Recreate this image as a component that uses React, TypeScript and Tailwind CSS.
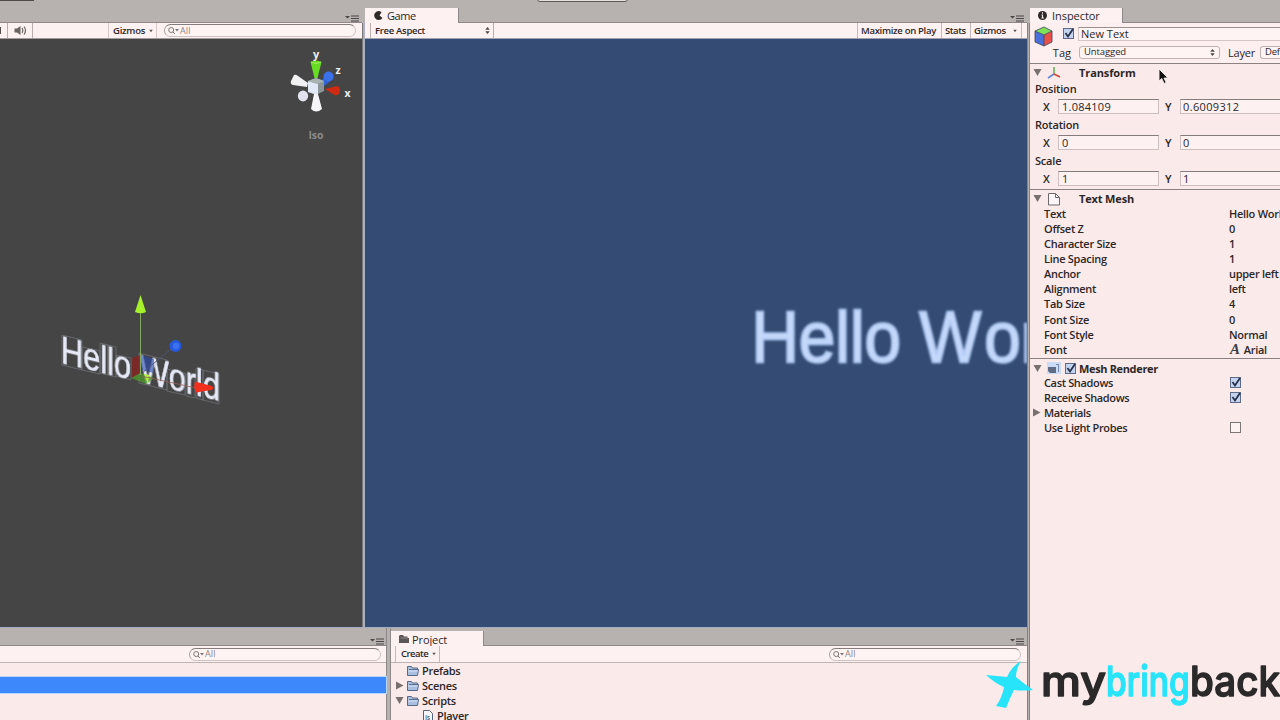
import React from 'react';
import clsx from 'clsx';

interface PanelMenuProps {
    className?: string;
}

function PanelMenu({ className }: PanelMenuProps) {
    return (
        <svg className={clsx('w-[14px] h-[7px] shrink-0', className)} viewBox="0 0 14 7">
            <path d="M0 1h5L2.5 3.6z" fill="#4b4646" />
            <path d="M6 1h8M6 3.5h8M6 6h8" stroke="#4b4646" strokeWidth="1.2" />
        </svg>
    );
}

function SearchField({ className }: { className?: string }) {
    return (
        <div
            className={clsx(
                'h-[13px] flex items-center rounded-full border border-[#cfc2c2] border-t-[#857d7d] border-l-[#a89f9f] bg-[#fff4f4] pl-[3px]',
                className
            )}
        >
            <svg className="w-[11px] h-[9px]" viewBox="0 0 11 9" fill="none" stroke="#7c7474">
                <circle cx="3.2" cy="4" r="2.5" />
                <path d="M5 6l1.8 2" />
                <path d="M7 3h4L9 5.4z" fill="#7c7474" stroke="none" />
            </svg>
            <span className="text-[9px] leading-[9px] font-normal tracking-[0.1px] text-[#8d8585] pl-px pb-px">All</span>
        </div>
    );
}

function Caret() {
    return (
        <svg className="w-[4px] h-[4px] shrink-0" viewBox="0 0 5 4">
            <path d="M0.3 0.5h4.4L2.5 3.5z" fill="#5d5656" />
        </svg>
    );
}

function UpDown() {
    return (
        <svg className="w-[5px] h-[7px] shrink-0" viewBox="0 0 5 7">
            <path d="M0.3 2.8h4.4L2.5 0zM0.3 4.2h4.4L2.5 7z" fill="#4a4444" />
        </svg>
    );
}

function Foldout({ open = true }: { open?: boolean }) {
    return (
        <svg className="w-[9px] h-[9px] shrink-0" viewBox="0 0 9 9">
            <path d={open ? 'M0.5 1h8L4.500 8z' : 'M1 0.5v8L8.5 4.5z'} fill="#77706f" />
        </svg>
    );
}

function Checkbox({ checked = false }: { checked?: boolean }) {
    return (
        <svg className="w-[13px] h-[13px] shrink-0" viewBox="0 0 13 13">
            <rect
                x="1.5"
                y="1.5"
                width="10"
                height="10"
                fill={checked ? '#c4d4f0' : '#fdf3f3'}
                stroke={checked ? '#5f6b85' : '#7d7676'}
            />
            {checked && <path d="M3.5 6l2.5 3.5L11 2" fill="none" stroke="#26304a" strokeWidth="1.8" />}
        </svg>
    );
}

function SpeakerIcon() {
    return (
        <svg className="w-[13px] h-[11px]" viewBox="0 0 13 11" fill="none" stroke="#6b6464">
            <path d="M0.5 3.5h2.5L6.5 1v9L3 7.5H0.5z" fill="#6b6464" stroke="none" />
            <path d="M8 3.2q1.6 2.3 0 4.6M10 1.5q3 4 0 8" strokeWidth="1.2" />
        </svg>
    );
}

function Folder() {
    return (
        <svg className="w-[14px] h-[12px] shrink-0" viewBox="0 0 14 12">
            <path d="M1.5 10.5v-9h4l1 1.5h5v1.5h1l-1 6z" fill="#a9bfe0" stroke="#566887" />
            <path d="M3 4.5h9" stroke="#566887" strokeWidth="0.9" />
            <path d="M2 6h9.6" stroke="#d5e3f8" />
        </svg>
    );
}

// Orientation gizmo in the corner of the scene view
function AxisGizmo() {
    return (
        <svg className="absolute left-[285px] top-[8px] w-[70px] h-[98px]" viewBox="285 47 70 98">
            <path d="M320 82l7-8 6 5-9 7z" fill="#2f62d8" />
            <circle cx="328.500" cy="76.500" r="5" fill="#3a70ea" />
            <path d="M291 81l3-6q2-1 4 1l10 7-1 4-14-2q-3-1-2-4z" fill="#f1f0f3" />
            <path d="M308 81l8-3 8 3v10l-8 4-8-3z" fill="#8b9699" />
            <path d="M308 81l10 3v11l-10-3z" fill="#dfe8f4" />
            <path d="M308 81l8-3 8 3-6 3z" fill="#a8b2b3" />
            <ellipse cx="303" cy="96" rx="5.200" ry="5.400" fill="#e2e2ee" />
            <path d="M310.500 62q5.500-3 11 0l-4 16h-3z" fill="#68dc22" />
            <path d="M311 62q5 3 10 0" stroke="#a1f25b" fill="none" />
            <path d="M325 89l12-3q4 1 2.500 7-2 3-5 2z" fill="#d12a13" />
            <path d="M314 94h4l4 15q-6 5-11 0z" fill="#f6f5f7" />
            <g fontFamily="Open Sans, sans-serif" fontWeight="700" fill="#eeeeee">
                <text x="313" y="58" fontSize="11">y</text>
                <text x="335.500" y="74" fontSize="10.500">z</text>
                <text x="344.500" y="97" fontSize="10.500">x</text>
                <text x="308.500" y="139" fontSize="10.500" fill="#8b8b8b" textLength="15">Iso</text>
            </g>
        </svg>
    );
}

function SceneObjects() {
    return (
        <svg className="absolute left-[50px] top-[251px] w-[190px] h-[130px]" viewBox="50 290 190 130">
            <g fill="none" stroke="#6c7076" strokeWidth="0.8">
                <path d="M62 335l20 5v30l-20-5zM82 347l18 4v23l-18-4zM100 343l8 2v30l-8-2zM108 345l8 2v30l-8-2zM116 355l15 3v22l-15-4z" />
                <path d="M139 353l28 7v30l-28-7zM167 369l18 4v22l-18-4zM186 374l9 2v22l-9-2zM196 368l7 2v30l-7-2zM203 370l16 4v30l-16-4z" />
            </g>
            <text
                transform="matrix(.81 .194 0 1 61 363)"
                fontFamily="Liberation Sans, Arial, sans-serif"
                fontSize="38"
                fill="#e6e9f6"
                stroke="#e6e9f6"
                strokeWidth="0.6"
                className="blur-[0.3px] [font-kerning:none]"
            >
                Hello World
            </text>
            <path d="M132 358l8-3v19l-8 4z" fill="#8c2020" opacity=".75" />
            <path d="M141 355l13 4v14l-13-3z" fill="#2848b0" opacity=".6" />
            <path d="M131 378l9-5 14 5-8 6z" fill="#4f9b2b" opacity=".75" />
            <path d="M144 374l5 1-1 9z" fill="#b4f03c" />
            <path d="M140.500 313v62" stroke="#83a860" />
            <path d="M141 374l30-25" stroke="#4b567c" />
            <path d="M141 376l55 12" stroke="#94605a" strokeWidth="0.8" />
            <path d="M135 312l5.500-17 5.500 17q-5 2.500-11 0z" fill="#a6f02c" />
            <circle cx="175.500" cy="346" r="6" fill="#265ade" />
            <circle cx="176" cy="346" r="3.200" fill="#3c72f2" />
            <path d="M195 381.500l13 3.500q5 .5 5.500 3-1 2.500-5.500 2.500l-12 2q-3-5-1-11z" fill="#f0301c" />
        </svg>
    );
}

function GameText() {
    return (
        <svg className="absolute left-[375px] top-[251px] w-[287px] h-[100px] blur-[0.9px]" viewBox="740 290 287 100">
            <text
                transform="matrix(.905 0 0 1 751.500 362)"
                fontFamily="Liberation Sans, Arial, sans-serif"
                fontSize="72.500"
                fill="#c6dafb"
                stroke="#b4cdf5"
                strokeWidth="2.400"
                className="[font-kerning:none]"
            >
                Hello W<tspan dx="3.500">orld</tspan>
            </text>
        </svg>
    );
}

function SceneView() {
    return (
        <div className="w-[362px] flex flex-col">
            <div className="h-[23px] flex justify-end items-end pr-[3px] border-b border-[#8f8888]">
                <PanelMenu />
            </div>
            <div className="h-[16px] flex items-center bg-[#fdf1f1] border-b border-[#a49c9c] text-[9.5px] font-semibold tracking-[-0.25px]">
                <div className="w-[8px] h-full border-r border-[#b9afaf] flex items-center">
                    <div className="w-px h-[7px] bg-[#554f4f]" />
                </div>
                <div className="w-[25px] h-full border-r border-[#b9afaf] flex items-center justify-center">
                    <SpeakerIcon />
                </div>
                <div className="ml-[75px] w-[49px] h-full border-x border-[#d6caca] flex items-center justify-between pl-[4px] pr-[3px]">
                    Gizmos
                    <Caret />
                </div>
                <SearchField className="ml-[7px] w-[192px]" />
            </div>
            <div className="relative flex-1 bg-[#454545] overflow-hidden">
                <AxisGizmo />
                <SceneObjects />
            </div>
        </div>
    );
}

function GameView() {
    return (
        <div className="w-[662px] flex flex-col">
            <div className="h-[23px] flex items-end">
                <div className="w-[94px] h-[15px] bg-[#fdf1f1] border-r border-[#8f8888] flex items-center pl-[9px] text-[11px] font-medium tracking-[-0.4px]">
                    <svg className="w-[9px] h-[9px] mr-[4px]" viewBox="0 0 9 9">
                        <path d="M4.500 0a4.500 4.500 0 0 1 3 1.200L5.500 4.500 8.500 7A4.500 4.500 0 1 1 4.500 0z" fill="#302b2b" />
                    </svg>
                    Game
                </div>
                <div className="flex-1 h-[15px] flex items-end justify-end pr-[3px] border-b border-[#8f8888]">
                    <PanelMenu />
                </div>
            </div>
            <div className="h-[16px] flex items-center bg-[#fdf1f1] border-b border-[#a4a0b0] text-[9.5px] font-semibold tracking-[-0.3px]">
                <div className="ml-[5px] w-[124px] h-full border-x border-[#b9afaf] flex items-center justify-between pl-[4px] pr-[3px]">
                    Free Aspect
                    <UpDown />
                </div>
                <div className="ml-auto h-full flex">
                    <div className="w-[84px] border-l border-[#c4baba] flex items-center pl-[3px] whitespace-nowrap">
                        Maximize on Play
                    </div>
                    <div className="w-[29px] border-l border-[#c4baba] flex items-center pl-[3px] tracking-[-0.45px]">Stats</div>
                    <div className="w-[52px] border-x border-[#c4baba] flex items-center justify-between pl-[3px] pr-[4px]">
                        Gizmos
                        <Caret />
                    </div>
                    <div className="w-[5px]" />
                </div>
            </div>
            <div className="relative flex-1 bg-[#344c74] overflow-hidden">
                <GameText />
            </div>
        </div>
    );
}

function HierarchyPanel() {
    return (
        <div className="w-[387px] flex flex-col bg-[#fbeaea] border-r border-[#8f8888]">
            <div className="h-[18px] shrink-0 bg-[#b7b1b0] flex justify-end items-end pr-[2px] border-b border-[#8f8888]">
                <PanelMenu />
            </div>
            <div className="h-[17px] shrink-0 bg-[#fdf1f1] border-b border-[#bfb3b3] flex items-center pl-[189px]">
                <SearchField className="w-[192px]" />
            </div>
            <div className="mt-[14px] h-[16px] bg-[#3d88fb] outline outline-[#b9d5fb]" />
        </div>
    );
}

const assets = [
    { name: 'Prefabs', open: null },
    { name: 'Scenes', open: false },
    { name: 'Scripts', open: true },
];

function ProjectPanel() {
    return (
        <div className="flex-1 ml-[3px] flex flex-col bg-[#fbeaea] border-l border-[#8f8888]">
            <div className="h-[18px] shrink-0 bg-[#b7b1b0] flex items-end">
                <div className="w-[93px] h-[15px] bg-[#fdf1f1] border-r border-[#8f8888] flex items-center pl-[8px] pt-px text-[11px] font-medium tracking-[-0.1px]">
                    <svg className="w-[10px] h-[9px] mr-[3px]" viewBox="0 0 10 9">
                        <path d="M0 8V1l1-1h3l1 1.500h3.500V3H10v5z" fill="#5b5656" />
                        <path d="M1.500 3H9" stroke="#a19b9b" strokeWidth="0.7" />
                    </svg>
                    Project
                </div>
                <div className="flex-1 h-[15px] flex items-end justify-end pr-[3px] border-b border-[#8f8888]">
                    <PanelMenu />
                </div>
            </div>
            <div className="h-[17px] shrink-0 bg-[#fdf1f1] border-b border-[#bfb3b3] flex items-center text-[9.5px] font-semibold tracking-[-0.5px]">
                <div className="ml-[4px] w-[45px] h-full border-x border-[#c4baba] flex items-center justify-between pl-[5px] pr-[3px]">
                    Create
                    <Caret />
                </div>
                <SearchField className="ml-auto mr-[6px] w-[192px]" />
            </div>
            <div className="text-[11px] font-semibold tracking-[-0.3px]">
                {assets.map((asset) => (
                    <div key={asset.name} className="h-[15px] flex items-center pl-[4px]">
                        <div className="w-[11px]">{asset.open !== null && <Foldout open={asset.open} />}</div>
                        <Folder />
                        <span className="ml-[2px]">{asset.name}</span>
                    </div>
                ))}
                <div className="h-[15px] flex items-center pl-[31px]">
                    <svg className="w-[12px] h-[14px] shrink-0" viewBox="0 0 12 14">
                        <path d="M1.500 1.500h6l3 3v9h-9z" fill="#f6f6fb" stroke="#57617a" />
                        <text x="3" y="11" fontSize="7" fontFamily="Open Sans, sans-serif" fill="#57617a">
                            Js
                        </text>
                    </svg>
                    <span className="ml-[3px]">Player</span>
                </div>
            </div>
        </div>
    );
}

interface VectorRowProps {
    label: string;
    x: string;
    y: string;
}

function VectorRow({ label, x, y }: VectorRowProps) {
    return (
        <div className="h-[36px]">
            <div className="h-[18px] flex items-center pl-[5px] tracking-[-0.2px]">{label}</div>
            <div className="h-[18px] flex items-center pl-[13px]">
                <span className="w-[15px]">X</span>
                <div className="w-[101px] h-[15px] flex items-center pl-[3px] border border-[#cdbfbf] border-t-[#857d7d] bg-[#fdf1f1] font-medium tracking-[0.25px]">
                    {x}
                </div>
                <span className="w-[21px] pl-[6px]">Y</span>
                <div className="flex-1 h-[15px] flex items-center pl-[2px] border border-r-0 border-[#cdbfbf] border-t-[#857d7d] bg-[#fdf1f1] font-medium tracking-[0.35px]">
                    {y}
                </div>
            </div>
        </div>
    );
}

const textMesh = [
    ['Text', 'Hello World'],
    ['Offset Z', '0'],
    ['Character Size', '1'],
    ['Line Spacing', '1'],
    ['Anchor', 'upper left'],
    ['Alignment', 'left'],
    ['Tab Size', '4'],
    ['Font Size', '0'],
    ['Font Style', 'Normal'],
];

function Inspector() {
    return (
        <div className="w-[250px] shrink-0 flex flex-col bg-[#fbeaea] overflow-hidden text-[11px] font-semibold whitespace-nowrap">
            <div className="h-[23px] shrink-0 bg-[#b7b1b0] flex items-end">
                <div className="w-[93px] h-[15px] bg-[#fdf1f1] border-r border-[#8f8888] flex items-center pl-[8px] font-medium tracking-[-0.05px]">
                    <svg className="w-[9px] h-[9px] mr-[5px]" viewBox="0 0 9 9">
                        <circle cx="4.500" cy="4.500" r="4.500" fill="#2f2a2a" />
                        <path d="M4.500 1.300v1.500M3.500 4h1v3M3.300 7h2.600" stroke="#f5eaea" strokeWidth="1.100" fill="none" />
                    </svg>
                    Inspector
                </div>
                <div className="flex-1 h-[15px] border-b border-[#8f8888]" />
            </div>
            <div className="h-[41px] shrink-0 flex border-b border-[#8a8282] bg-[#fdefef]">
                <svg className="w-[20px] h-[22px] mt-[3px] ml-[4px] shrink-0" viewBox="0 0 20 22">
                    <path d="M1 5l9-4 8 4-8 4z" fill="#7fe05a" />
                    <path d="M1 5l9 4v11l-9-4z" fill="#4a70dc" />
                    <path d="M10 9l8-4v11l-8 4z" fill="#e8504a" />
                    <path d="M1 5l9-4 8 4v11l-8 4-9-4zM1 5l9 4 8-4M10 9v11" fill="none" stroke="#3c4253" strokeWidth="0.8" />
                </svg>
                <div className="flex-1 min-w-0">
                    <div className="h-[20px] flex items-center pl-[8px] pt-[1px]">
                        <Checkbox checked />
                        <div className="ml-[3px] flex-1 h-[14px] flex items-center pl-[2px] border border-r-0 border-[#d3c5c5] border-t-[#9a9090] bg-[#fff4f4] font-medium">
                            New Text
                        </div>
                    </div>
                    <div className="h-[18px] flex items-center font-medium">
                        <span className="w-[17px] shrink-0 flex justify-end">Tag</span>
                        <div className="ml-[8px] w-[141px] shrink-0 h-[13px] flex items-center justify-between pl-[4px] pr-[4px] rounded-[3px] border border-[#bfb3b3] bg-[#fff4f4] text-[9.5px] tracking-[-0.1px]">
                            Untagged
                            <UpDown />
                        </div>
                        <span className="ml-[8px] w-[32px] shrink-0 tracking-[-0.2px]">Layer</span>
                        <div className="flex-1 min-w-0 h-[13px] flex items-center pl-[4px] rounded-l-[3px] border border-r-0 border-[#bfb3b3] bg-[#fff4f4] text-[9.5px] tracking-[-0.2px]">
                            Def
                        </div>
                    </div>
                </div>
            </div>
            <div className="h-[126px] shrink-0 border-b border-[#8a8282]">
                <div className="h-[15px] flex items-center pl-[3px] pt-[2px]">
                    <Foldout />
                    <svg className="w-[14px] h-[12px] ml-[5px]" viewBox="0 0 14 12">
                        <path d="M7 7V0" stroke="#63b553" strokeWidth="1.600" />
                        <path d="M7 7l-6 4" stroke="#5a86d8" strokeWidth="1.600" />
                        <path d="M7 7l6 3" stroke="#d24a3a" strokeWidth="1.800" />
                    </svg>
                    <span className="ml-[18px] font-bold tracking-[-0.1px]">Transform</span>
                </div>
                <VectorRow label="Position" x="1.084109" y="0.6009312" />
                <VectorRow label="Rotation" x="0" y="0" />
                <VectorRow label="Scale" x="1" y="1" />
            </div>
            <div className="h-[169px] shrink-0 border-b border-[#8a8282] tracking-[-0.28px]">
                <div className="h-[15.500px] flex items-center pl-[3px] pt-[2px]">
                    <Foldout />
                    <svg className="w-[14px] h-[14px] ml-[5px]" viewBox="0 0 14 14">
                        <path d="M1.500 1.500h7l4 4v7.500h-11z" fill="#fdf6f8" stroke="#6f686c" />
                        <path d="M8.500 1.500v4h4" fill="none" stroke="#6f686c" />
                    </svg>
                    <span className="ml-[18px] font-bold tracking-[-0.15px]">Text Mesh</span>
                </div>
                {textMesh.map(([label, value]) => (
                    <div key={label} className="h-[15.150px] flex items-center pl-[14px]">
                        <span className="w-[185px] shrink-0">{label}</span>
                        <span>{value}</span>
                    </div>
                ))}
                <div className="h-[15px] flex items-center pl-[14px]">
                    <span className="w-[186px] shrink-0">Font</span>
                    <span className="font-['Liberation_Serif',serif] italic font-bold text-[15px] leading-none text-[#3f4046]">A</span>
                    <span className="ml-[4px]">Arial</span>
                </div>
            </div>
            <div className="shrink-0 tracking-[-0.35px]">
                <div className="h-[16px] flex items-center pl-[3px] pt-[2px]">
                    <Foldout />
                    <svg className="w-[14px] h-[12px] ml-[5px]" viewBox="0 0 14 12">
                        <path d="M0 0h14v12H0z" fill="#cbdcf8" />
                        <path d="M1 5h8v6H3l-2-2z" fill="#606b86" />
                        <path d="M11.500 2v8M9 2.500h3" stroke="#7d8cab" />
                    </svg>
                    <div className="ml-[3px] flex">
                        <Checkbox checked />
                    </div>
                    <span className="ml-[2px] font-bold">Mesh Renderer</span>
                </div>
                <div className="h-[15px] flex items-center pl-[14px]">
                    <span className="w-[185px]">Cast Shadows</span>
                    <Checkbox checked />
                </div>
                <div className="h-[15px] flex items-center pl-[14px]">
                    <span className="w-[185px]">Receive Shadows</span>
                    <Checkbox checked />
                </div>
                <div className="h-[15px] flex items-center pl-[2px]">
                    <Foldout open={false} />
                    <span className="ml-[3px]">Materials</span>
                </div>
                <div className="h-[15px] flex items-center pl-[14px]">
                    <span className="w-[185px]">Use Light Probes</span>
                    <Checkbox />
                </div>
            </div>
        </div>
    );
}

function Watermark() {
    return (
        <svg className="absolute left-[980px] top-[652px] w-[300px] h-[68px] blur-[0.7px]" viewBox="980 652 300 68">
            <path
                d="M1021 661q-5 8-5 16 7 6 17 13-9 1-19 0-4 8-8 18l-10-2q6-8 8-19-8-3-18-12 11 1 21 2 4-10 14-16z"
                fill="#28e4fa"
            />
            <g fontFamily="Inter, sans-serif" fontWeight="500" fontSize="41" strokeWidth="1.400" strokeLinejoin="round">
                <text x="1041" y="696" textLength="65" lengthAdjust="spacingAndGlyphs" fill="#2b2929" stroke="#2b2929">
                    my
                </text>
                <text x="1106" y="696" textLength="84" lengthAdjust="spacingAndGlyphs" fill="#28e4fa" stroke="#28e4fa">
                    bring
                </text>
                <text x="1190" y="696" textLength="90" lengthAdjust="spacingAndGlyphs" fill="#2b2929" stroke="#2b2929">
                    back
                </text>
            </g>
        </svg>
    );
}

export default function App() {
    return (
        <div className="relative w-[1280px] h-[720px] overflow-hidden flex bg-[#b7b1b0] font-['Open_Sans','Noto_Sans',sans-serif] text-[#2c2727] leading-none">
            <div className="w-[1027px] shrink-0 flex flex-col">
                <div className="h-[627px] shrink-0 flex">
                    <SceneView />
                    <div className="w-[3px] mt-[23px] bg-[#abb0bf] border-l border-[#77777c]" />
                    <GameView />
                </div>
                <div className="h-px shrink-0 bg-[#a5adc4]" />
                <div className="flex-1 min-h-0 flex overflow-hidden">
                    <HierarchyPanel />
                    <ProjectPanel />
                </div>
            </div>
            <div className="w-[3px] shrink-0 mt-[23px] bg-[#b7b1b0] border-x border-[#858189]" />
            <Inspector />

            {/* bottoms of the main toolbar buttons */}
            <div className="absolute left-0 top-0 w-[34px] h-px bg-[#4f4949]" />
            <div className="absolute left-[537px] top-[-8px] w-[91px] h-[10px] rounded-[3px] border border-[#5d5656] bg-[#e9dfdf]" />

            <svg className="absolute left-[1158px] top-[68px] w-[11px] h-[17px]" viewBox="0 0 11 17">
                <path d="M1 1v12l2.800-2.500L6 15.500l2.200-1L6 10h4z" fill="#151212" stroke="#f7eeee" strokeWidth="0.900" />
            </svg>
            <Watermark />
        </div>
    );
}
